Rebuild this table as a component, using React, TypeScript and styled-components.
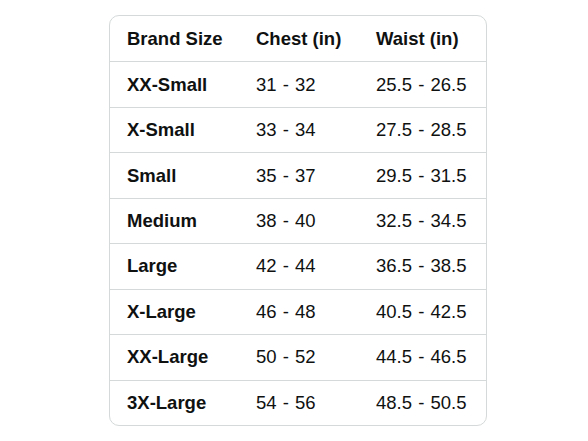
import styled, { createGlobalStyle } from "styled-components";

const GlobalStyle = createGlobalStyle`
  html, body {
    margin: 0;
    padding: 0;
    background: #ffffff;
  }
  body {
    font-family: "Liberation Sans", Arial, sans-serif;
    color: #0f1111;
  }
`;

const Page = styled.div`
  width: 588px;
  height: 441px;
  display: flex;
  padding: 15px 0 0 109px;
  box-sizing: border-box;
`;

const Card = styled.div`
  width: 378px;
  height: 411px;
  border: 1px solid #d5d9d9;
  border-radius: 10px;
  overflow: hidden;
  box-sizing: border-box;
  display: grid;
  grid-template-rows: repeat(9, 1fr);
`;

const Row = styled.div`
  display: grid;
  grid-template-columns: 129px 120px 1fr;
  align-items: center;
  padding-left: 17px;
  border-top: 1px solid #d5d9d9;
  &:first-child {
    border-top: none;
  }
`;

const Cell = styled.div<{ $bold?: boolean }>`
  font-size: 18.5px;
  font-weight: ${(p) => (p.$bold ? 700 : 400)};
  word-spacing: ${(p) => (p.$bold ? 0 : 1)}px;
  white-space: nowrap;
`;

const sizes: [string, string, string][] = [
  ["XX-Small", "31 - 32", "25.5 - 26.5"],
  ["X-Small", "33 - 34", "27.5 - 28.5"],
  ["Small", "35 - 37", "29.5 - 31.5"],
  ["Medium", "38 - 40", "32.5 - 34.5"],
  ["Large", "42 - 44", "36.5 - 38.5"],
  ["X-Large", "46 - 48", "40.5 - 42.5"],
  ["XX-Large", "50 - 52", "44.5 - 46.5"],
  ["3X-Large", "54 - 56", "48.5 - 50.5"],
];

export default function App() {
  return (
    <>
      <GlobalStyle />
      <Page>
        <Card>
          <Row>
            <Cell $bold>Brand Size</Cell>
            <Cell $bold>Chest (in)</Cell>
            <Cell $bold>Waist (in)</Cell>
          </Row>
          {sizes.map(([name, chest, waist]) => (
            <Row key={name}>
              <Cell $bold>{name}</Cell>
              <Cell>{chest}</Cell>
              <Cell>{waist}</Cell>
            </Row>
          ))}
        </Card>
      </Page>
    </>
  );
}
